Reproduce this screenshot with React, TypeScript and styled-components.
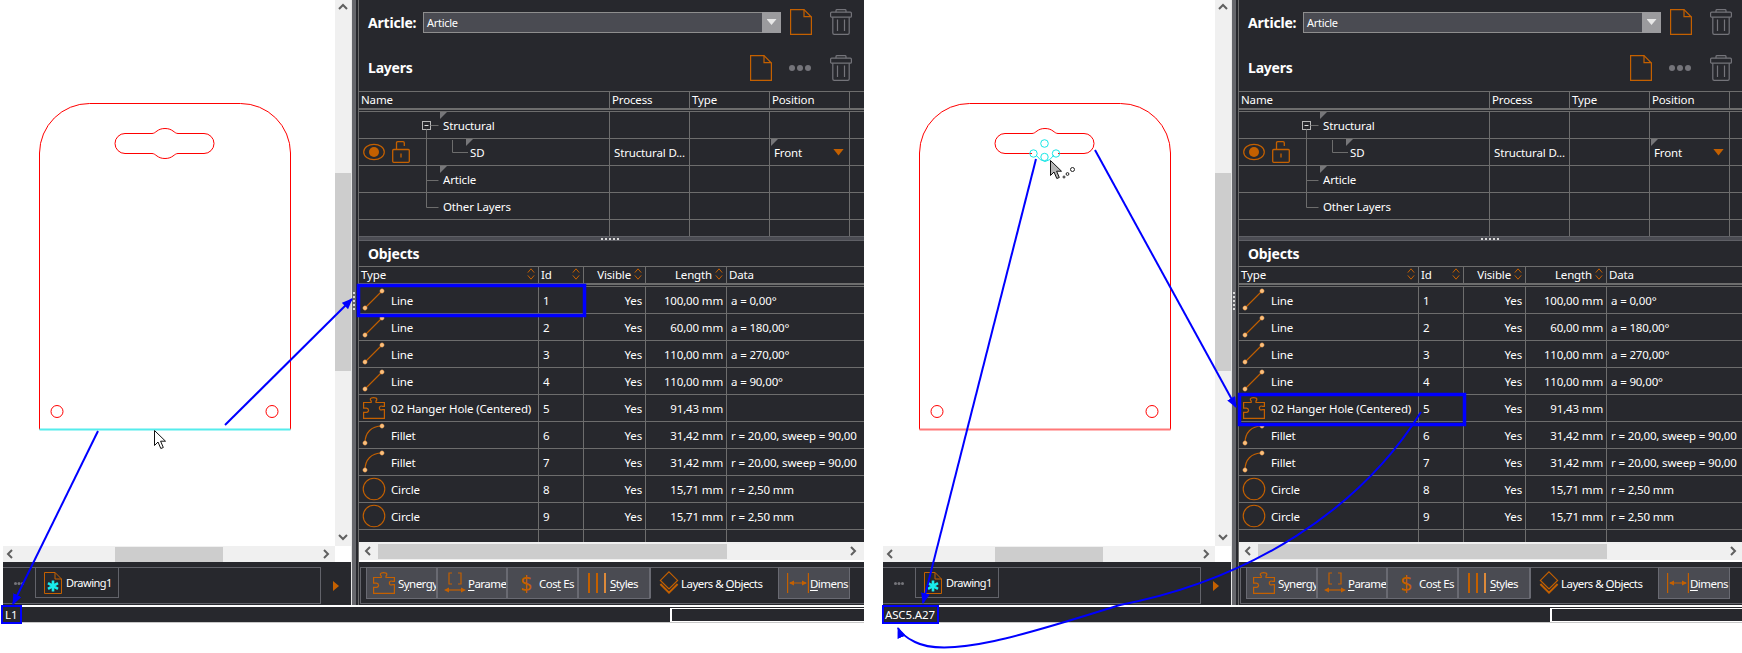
import React from "react";
import styled, { createGlobalStyle } from "styled-components";

const ORANGE = "#c46000";
const LINE = "#6d6d6d";
const DARK = "#27282d";
const FONT = `"Noto Sans", "Open Sans", Arial, sans-serif`;

const Global = createGlobalStyle`
  html, body { margin: 0; padding: 0; background: #fff; }
  * { box-sizing: border-box; }
`;

const Page = styled.div`
  position: relative;
  width: 1742px;
  height: 653px;
  overflow: hidden;
  background: #fff;
  display: flex;
  gap: 16px;
  font-family: ${FONT};
  font-size: 11.5px;
  letter-spacing: -0.15px;
  color: #fff;
`;
const Screen = styled.section`
  flex: none;
  width: 864px;
  height: 623px;
  display: flex;
  flex-direction: column;
`;
const Main = styled.div`
  display: grid;
  grid-template-columns: 348px 7px 506px;
  margin-left: 3px;
  height: 605px;
`;
const LeftColumn = styled.div`
  display: flex;
  flex-direction: column;
`;
const CanvasRow = styled.div`
  display: flex;
  height: 546px;
`;
const Canvas = styled.div`
  width: 332px;
  height: 546px;
  background: #fff;
`;
const VScroll = styled.div`
  width: 16px;
  height: 546px;
  background: #f0f0f0;
  display: flex;
  flex-direction: column;
  align-items: center;
`;
const VThumb = styled.div`
  width: 16px;
  height: 198px;
  margin-top: 157px;
  margin-bottom: auto;
  background: #cdcdcd;
`;
const HScrollRow = styled.div`
  width: 332px;
  height: 16px;
  background: #f0f0f0;
  display: flex;
  align-items: center;
  flex: none;
`;
const HThumb = styled.div`
  width: 108px;
  height: 15px;
  margin-left: 96px;
  margin-right: auto;
  background: #cdcdcd;
`;
const Corner = styled.div`
  display: flex;
  height: 16px;
`;
const DocTabsRow = styled.div`
  height: 43px;
  background: ${DARK};
  padding: 5px 0 1px;
  display: flex;
  align-items: stretch;
`;
const DocTabsStrip = styled.div`
  width: 318px;
  border: 1px solid #62636a;
  border-width: 1px 1px 1px 0;
  display: flex;
  align-items: flex-start;
`;
const MoreDots = styled.div`
  width: 32px;
  height: 31px;
  display: flex;
  align-items: center;
  justify-content: center;
`;
const DocTab = styled.div`
  width: 84px;
  height: 31px;
  margin-top: -1px;
  border: 1px solid #62636a;
  display: flex;
  align-items: center;
  gap: 4px;
  padding-left: 8px;
  font-size: 11px;
  letter-spacing: -0.5px;
`;
const DocArrow = styled.div`
  width: 30px;
  display: flex;
  align-items: center;
  justify-content: center;
  padding-right: 1px;
`;
const Splitter = styled.div`
  position: relative;
  background: linear-gradient(to right, #e6e6e6 0 1px, #66676c 1px 5px, ${DARK} 5px);
`;
const GripV = styled.div`
  position: absolute;
  left: 2px;
  top: 292px;
  width: 2px;
  height: 18px;
  background: repeating-linear-gradient(to bottom, #d8d8d8 0 2px, transparent 2px 4px);
`;
const Panel = styled.div`
  background: ${DARK};
  border-left: 1px solid ${LINE};
  display: flex;
  flex-direction: column;
  height: 605px;
  overflow: hidden;
`;
const ArticleRow = styled.div`
  height: 44px;
  display: flex;
  align-items: center;
  padding-left: 9px;
`;
const HeadLabel = styled.div`
  font-weight: 700;
  font-size: 14px;
  letter-spacing: -0.2px;
  white-space: nowrap;
`;
const ArticleLabel = styled(HeadLabel)`
  width: 55px;
`;
const Select = styled.div`
  width: 358px;
  height: 21px;
  border: 1px solid #8e8e8e;
  background: #4a4b52;
  display: flex;
  align-items: center;
  justify-content: space-between;
  padding-left: 3px;
  font-size: 11px;
  letter-spacing: -0.3px;
`;
const SelectButton = styled.div`
  width: 19px;
  height: 21px;
  margin-right: -1px;
  background: #9b9b9e;
  display: flex;
  align-items: center;
  justify-content: center;
`;
const SelectTriangle = styled.div`
  width: 10px;
  height: 6px;
  background: #e8e8e8;
  clip-path: polygon(0 0, 100% 0, 50% 100%);
`;
const IconSlot = styled.div<{ $left: number }>`
  margin-left: ${(p) => p.$left}px;
  display: flex;
  align-items: center;
`;
const LayersHead = styled.div`
  height: 47px;
  display: flex;
  align-items: center;
  padding-left: 9px;
`;
const Spacer = styled.div`
  flex: 1;
`;
const LayerTable = styled.div`
  position: relative;
  height: 145px;
  flex: none;
`;
const LAYER_COLS = "251px 80px 80px 80px 1fr";
const OBJ_COLS = "180px 45px 62px 81px 1fr";
const HeaderRow = styled.div<{ $cols: string }>`
  height: 21px;
  display: grid;
  grid-template-columns: ${(p) => p.$cols};
  border-top: 1px solid ${LINE};
  border-bottom: 1px solid ${LINE};
  position: relative;
  &::after {
    content: "";
    position: absolute;
    left: 0;
    right: 0;
    top: 16px;
    height: 2px;
    background: ${LINE};
  }
`;
const HeaderCell = styled.div<{ $right?: boolean; $last?: boolean }>`
  height: 16px;
  display: flex;
  align-items: center;
  justify-content: ${(p) => (p.$right ? "flex-end" : "space-between")};
  gap: 3px;
  padding: 0 3px 2px 2px;
  border-right: ${(p) => (p.$last ? "none" : `1px solid ${LINE}`)};
  white-space: nowrap;
`;
const GridRow = styled.div<{ $cols: string; $h?: number; $plain?: boolean }>`
  height: ${(p) => p.$h ?? 27}px;
  display: grid;
  grid-template-columns: ${(p) => p.$cols};
  border-bottom: ${(p) => (p.$plain ? "none" : `1px solid ${LINE}`)};
`;
const Cell = styled.div<{ $indent?: number; $right?: boolean; $last?: boolean }>`
  position: relative;
  display: flex;
  align-items: center;
  justify-content: ${(p) => (p.$right ? "flex-end" : "flex-start")};
  padding-left: ${(p) => p.$indent ?? 0}px;
  padding-right: ${(p) => (p.$right ? 3 : 0)}px;
  border-right: ${(p) => (p.$last ? "none" : `1px solid ${LINE}`)};
  white-space: nowrap;
  overflow: visible;
`;
const CornerMark = styled.span<{ $left: number }>`
  position: absolute;
  left: ${(p) => p.$left}px;
  top: 0;
  width: 7px;
  height: 7px;
  background: #77777a;
  clip-path: polygon(0 0, 100% 0, 0 100%);
`;
const TreeLines = styled.svg`
  position: absolute;
  left: 0;
  top: 0;
  pointer-events: none;
`;
const FrontArrow = styled.span`
  margin-left: auto;
  margin-right: 5px;
  width: 11px;
  height: 7px;
  background: ${ORANGE};
  clip-path: polygon(0 0, 100% 0, 50% 100%);
`;
const PaneSplit = styled.div`
  height: 5px;
  flex: none;
  background: #4b4c53;
  border-top: 1px solid #5f6066;
  border-bottom: 1px solid #5f6066;
  display: flex;
  align-items: center;
  justify-content: center;
`;
const PaneGrip = styled.div`
  width: 18px;
  height: 2px;
  margin-right: 3px;
  background: repeating-linear-gradient(to right, #d8d8d8 0 2px, transparent 2px 4px);
`;
const ObjectsHead = styled.div`
  height: 25px;
  flex: none;
  display: flex;
  align-items: center;
  padding-left: 9px;
`;
const ObjectTable = styled.div`
  height: 276px;
  flex: none;
`;
const TypeIconBox = styled.div`
  width: 24px;
  height: 24px;
  flex: none;
  margin-right: 5px;
  margin-left: 3px;
  display: flex;
  align-items: center;
  justify-content: center;
`;
const ObjScroll = styled.div`
  height: 18px;
  flex: none;
  background: #f0f0f0;
  display: flex;
  align-items: center;
  padding-left: 2px;
  padding-right: 2px;
`;
const ObjThumb = styled.div`
  width: 349px;
  height: 15px;
  margin-left: 1px;
  margin-right: auto;
  background: #cdcdcd;
`;
const WhiteGap = styled.div`
  height: 2px;
  flex: none;
  background: #fff;
`;
const ToolRow = styled.div`
  height: 43px;
  flex: none;
  padding: 5px 0 1px;
`;
const ToolStrip = styled.div`
  height: 37px;
  border: 1px solid #62636a;
  border-right: none;
  margin-left: 1px;
  padding-left: 5px;
  display: flex;
  align-items: flex-start;
`;
const ToolButton = styled.div<{ $w: number; $active?: boolean; $pad: number; $gap: number; $iconW: number }>`
  width: ${(p) => p.$w}px;
  height: 32px;
  margin-top: -1px;
  flex: none;
  display: flex;
  align-items: center;
  overflow: hidden;
  background: ${(p) => (p.$active ? "transparent" : "#4a4b52")};
  border: 1px solid ${(p) => (p.$active ? "transparent" : "#696a72")};
  border-left-color: #696a72;
  padding-left: ${(p) => p.$pad}px;
  gap: ${(p) => p.$gap}px;
  white-space: nowrap;
  letter-spacing: -0.55px;
  & > svg {
    flex: none;
    width: ${(p) => p.$iconW}px;
  }
  u {
    text-underline-offset: 2px;
  }
`;
const ToolLabel = styled.span`
  display: block;
`;
const Dollar = styled.span`
  width: 22px;
  text-align: center;
  color: ${ORANGE};
  font-size: 21px;
  line-height: 1;
  flex: none;
`;
const StatusBar = styled.div`
  margin-top: 2px;
  margin-left: 3px;
  height: 16px;
  display: flex;
  background: ${DARK};
  border-bottom: 1px solid #c8c8c8;
`;
const StatusText = styled.div`
  width: 667px;
  padding-left: 2px;
  line-height: 15px;
`;
const StatusBox = styled.div`
  flex: 1;
  margin-top: 1px;
  border: 1px solid #fff;
  border-right: none;
  border-left-width: 2px;
`;
const Overlay = styled.svg`
  position: absolute;
  left: 0;
  top: 0;
  pointer-events: none;
`;

/* ------------ icons ------------- */
const Doc = ({ color = ORANGE }: { color?: string }) => (
  <svg width="22" height="26" viewBox="0 0 22 26" fill="none" stroke={color} strokeWidth="1.2">
    <path d="M.6.6H14L21.4 8V25.4H.6Z" />
    <path d="M14 .6V7.6H21.4" />
  </svg>
);
const Trash = () => (
  <svg width="22" height="26" viewBox="0 0 22 26" fill="none" stroke="#74747a" strokeWidth="1.2">
    <path d="M6 3.2V1.4Q6 .6 7 .6H15Q16 .6 16 1.4V3.2" />
    <rect x=".6" y="3.2" width="20.8" height="5" rx="1" />
    <path d="M2.8 8.2V24Q2.8 25.4 4.2 25.4H17.8Q19.2 25.4 19.2 24V8.2M7.5 10.5V22M14.5 10.5V22" />
  </svg>
);
const Dots = ({ w = 22, color = "#74747a", r = 3 }: { w?: number; color?: string; r?: number }) => (
  <svg width={w} height={r * 2} viewBox={`0 0 ${w} ${r * 2}`} fill={color}>
    <circle cx={r} cy={r} r={r} />
    <circle cx={w / 2} cy={r} r={r} />
    <circle cx={w - r} cy={r} r={r} />
  </svg>
);
const Sort = () => (
  <svg width="8" height="12" viewBox="0 0 8 12" fill="none" stroke={ORANGE} strokeWidth="1" style={{ flex: "none" }}>
    <path d="M.8 4.6L4 .8L7.2 4.6M.8 7.4L4 11.2L7.2 7.4" />
  </svg>
);
const Node = ({ x, y }: { x: number; y: number }) => (
  <>
    <circle cx={x} cy={y} r="2.2" fill="#f0a050" stroke="none" />
    <path d={`M${x - 2.4} ${y}H${x + 2.4}M${x} ${y - 2.4}V${y + 2.4}`} stroke="#ffd9a8" strokeWidth=".7" />
  </>
);
const LineIcon = () => (
  <svg width="24" height="24" viewBox="0 0 24 24" fill="none" stroke={ORANGE} strokeWidth="1.1">
    <path d="M3 20L20 3" />
    <Node x={3} y={20} />
    <Node x={20} y={3} />
  </svg>
);
const FilletIcon = () => (
  <svg width="24" height="24" viewBox="0 0 24 24" fill="none" stroke={ORANGE} strokeWidth="1.1">
    <path d="M3 20C3 10 9 3 20 3" />
    <Node x={3} y={20} />
    <Node x={20} y={3} />
  </svg>
);
const CircleIcon = () => (
  <svg width="24" height="24" viewBox="0 0 24 24" fill="none" stroke={ORANGE} strokeWidth="1.1">
    <circle cx="12" cy="12" r="10.8" />
  </svg>
);
const Puzzle = ({ size = 22 }: { size?: number }) => (
  <svg width={size} height={size} viewBox="0 0 22 22" fill="none" stroke={ORANGE} strokeWidth="1.2">
    <path d="M.6 5.5H8.2V4Q7 3 7.4 1.8Q8 .6 10.5 .6Q13.5.6 13.8 2Q14 3.2 13 4V5.5H21.4V9.3H19.5Q18 8.6 16.8 9.6Q15.8 11 16.8 12.4Q18 13.3 19.5 12.7H21.4V21.4H.6V15.3H3.5Q5.2 15.3 5.6 13.5Q5.4 11.4 3.5 11.2H.6Z" />
  </svg>
);
const ParamIcon = () => (
  <svg width="22" height="22" viewBox="0 0 22 22" fill="none" stroke={ORANGE} strokeWidth="1.2">
    <path d="M8 1H5V12H8M14 1H17V12H14" />
    <path d="M3 18H19" />
    <path d="M0 18L5 15.5V20.5ZM22 18L17 15.5V20.5Z" fill={ORANGE} stroke="none" />
  </svg>
);
const StylesIcon = () => (
  <svg width="22" height="22" viewBox="0 0 22 22" fill={ORANGE}>
    <rect x="1" y="1" width="2" height="20" />
    <rect x="9" y="1" width="2" height="20" />
    <rect x="17" y="1" width="2" height="20" fill="#dd8a3a" />
  </svg>
);
const LayersIcon = () => (
  <svg width="20" height="24" viewBox="0 0 20 24" fill="none" stroke={ORANGE} strokeWidth="1.2">
    <path d="M10 .8L18.6 9.4L10 18L1.4 9.4Z" />
    <path d="M1.4 13L10 21.6L18.6 13" strokeWidth="2" />
  </svg>
);
const DimIcon = () => (
  <svg width="22" height="22" viewBox="0 0 22 22" fill="none" stroke={ORANGE} strokeWidth="1.2">
    <path d="M.6 1V21M21.4 1V21M3 11H19" />
    <path d="M2 11L7 8.5V13.5ZM20 11L15 8.5V13.5Z" fill={ORANGE} stroke="none" />
  </svg>
);
const DrawingIcon = () => (
  <svg width="18" height="22" viewBox="0 0 18 22" fill="none" stroke={ORANGE} strokeWidth="1">
    <path d="M.5.5H11L17.5 7V21.5H.5Z" />
    <path d="M11 .5V7H17.5" />
    <path d="M9 8.5V19.5M4 11.2L14 16.8M14 11.2L4 16.8" stroke="#19ecec" strokeWidth="2.6" />
  </svg>
);
const Chevron = ({ dir }: { dir: "left" | "right" | "up" | "down" }) => {
  const d = {
    left: "M7 2L3 6L7 10",
    right: "M3 2L7 6L3 10",
    up: "M2 7L6 3L10 7",
    down: "M2 3L6 7L10 3",
  }[dir];
  return (
    <svg width="16" height="16" viewBox="-2 -2 16 16" fill="none" stroke="#606060" strokeWidth="2" style={{ flex: "none" }}>
      <path d={d} />
    </svg>
  );
};
const EyeIcon = () => (
  <svg width="22" height="18" viewBox="0 0 22 18" fill="none" stroke={ORANGE} strokeWidth="1.2">
    <ellipse cx="11" cy="9" rx="10.3" ry="7.7" />
    <circle cx="11" cy="9" r="5" fill={ORANGE} stroke="none" />
  </svg>
);
const LockIcon = () => (
  <svg width="18" height="22" viewBox="0 0 18 22" fill="none" stroke={ORANGE} strokeWidth="1.3">
    <rect x=".7" y="8.5" width="16.6" height="12.8" rx="1" />
    <path d="M4.5 8.5V2Q4.5.7 5.8.7H11Q12.3.7 12.3 2V5M9 12.5V16.5" />
  </svg>
);
const DocTabArrow = () => (
  <svg width="6" height="10" viewBox="0 0 6 10" fill={ORANGE}>
    <path d="M0 0L6 5L0 10Z" />
  </svg>
);
const Cursor = ({ x, y, fill }: { x: number; y: number; fill: string }) => (
  <path
    transform={`translate(${x} ${y})`}
    d="M.5.5V15.5L4 12L6.8 18.5L9.3 17.5L6.6 11.2H11.5Z"
    fill={fill}
    stroke="#111"
    strokeWidth="1"
  />
);

/* ----------- data ------------ */
type Kind = "line" | "fillet" | "circle" | "hole";
const objects: { kind: Kind; name: string; id: number; len: string; data: string }[] = [
  { kind: "line", name: "Line", id: 1, len: "100,00 mm", data: "a = 0,00°" },
  { kind: "line", name: "Line", id: 2, len: "60,00 mm", data: "a = 180,00°" },
  { kind: "line", name: "Line", id: 3, len: "110,00 mm", data: "a = 270,00°" },
  { kind: "line", name: "Line", id: 4, len: "110,00 mm", data: "a = 90,00°" },
  { kind: "hole", name: "02 Hanger Hole (Centered)", id: 5, len: "91,43 mm", data: "" },
  { kind: "fillet", name: "Fillet", id: 6, len: "31,42 mm", data: "r = 20,00, sweep = 90,00" },
  { kind: "fillet", name: "Fillet", id: 7, len: "31,42 mm", data: "r = 20,00, sweep = 90,00" },
  { kind: "circle", name: "Circle", id: 8, len: "15,71 mm", data: "r = 2,50 mm" },
  { kind: "circle", name: "Circle", id: 9, len: "15,71 mm", data: "r = 2,50 mm" },
];
const kindIcon = (k: Kind) =>
  k === "line" ? <LineIcon /> : k === "fillet" ? <FilletIcon /> : k === "circle" ? <CircleIcon /> : <Puzzle />;

/* ----------- drawing ------------ */
const Drawing = ({ variant }: { variant: 1 | 2 }) => (
  <svg width="332" height="546" viewBox="3 0 332 546" fill="none" stroke="#ff0000" strokeWidth="1">
    <path d="M39.5 429.5V153A50 50 0 0 1 89.5 103.5H240.5A50 50 0 0 1 290.5 153V429.5" />
    <path d="M39.5 429.5H290.5" stroke={variant === 1 ? "#55ecec" : "#ff7878"} strokeWidth="2" />
    <path d="M152 153.5H125A10 10 0 0 1 125 133.5H152C156 133.5 157 128.5 165 128.5C173 128.5 174 133.5 178 133.5H204A10 10 0 0 1 204 153.5H178" />
    <circle cx="57" cy="411.5" r="6" />
    <circle cx="272" cy="411.5" r="6" />
    {variant === 1 ? (
      <path d="M178 153.5C174 153.5 173 158.5 165 158.5C157 158.5 156 153.5 152 153.5" />
    ) : (
      <g stroke="#19e6e6">
        <circle cx="164.5" cy="143.5" r="3.8" />
        <circle cx="153.5" cy="153.5" r="3.7" />
        <circle cx="176" cy="153.5" r="3.7" />
        <circle cx="164.5" cy="157" r="3.7" />
        <path d="M156 155Q160 161 165 161.5Q170 161 174 155" />
      </g>
    )}
    {variant === 1 ? (
      <Cursor x={154} y={430} fill="#fff" />
    ) : (
      <>
        <Cursor x={170} y={160} fill="#b5b5b5" />
        <g stroke="#222" fill="#fff">
          <circle cx="192.5" cy="169.5" r="2" />
          <circle cx="187.5" cy="174" r="1.4" />
          <circle cx="184" cy="177" r="1" />
        </g>
      </>
    )}
  </svg>
);

const ToolTabs = () => (
  <ToolStrip>
    <ToolButton $w={71} $pad={6} $gap={3} $iconW={22}>
      <Puzzle />
      <ToolLabel>S<u>y</u>nergy</ToolLabel>
    </ToolButton>
    <ToolButton $w={70} $pad={6} $gap={2} $iconW={22}>
      <ParamIcon />
      <ToolLabel><u>P</u>arame</ToolLabel>
    </ToolButton>
    <ToolButton $w={71} $pad={7} $gap={2} $iconW={22}>
      <Dollar>$</Dollar>
      <ToolLabel>Cos<u>t</u> Es</ToolLabel>
    </ToolButton>
    <ToolButton $w={72} $pad={8} $gap={1} $iconW={22}>
      <StylesIcon />
      <ToolLabel><u>S</u>tyles</ToolLabel>
    </ToolButton>
    <ToolButton $w={128} $pad={8} $gap={2} $iconW={20} $active>
      <LayersIcon />
      <ToolLabel>Layers &amp; <u>O</u>bjects</ToolLabel>
    </ToolButton>
    <ToolButton $w={72} $pad={8} $gap={1} $iconW={22}>
      <DimIcon />
      <ToolLabel><u>D</u>imens</ToolLabel>
    </ToolButton>
  </ToolStrip>
);

const LayersTable = () => (
  <LayerTable>
    <HeaderRow $cols={LAYER_COLS}>
      <HeaderCell>Name</HeaderCell>
      <HeaderCell>Process</HeaderCell>
      <HeaderCell>Type</HeaderCell>
      <HeaderCell>Position</HeaderCell>
      <HeaderCell $last />
    </HeaderRow>
    <GridRow $cols={LAYER_COLS}>
      <Cell $indent={84}>
        <CornerMark $left={81} />
        Structural
      </Cell>
      <Cell />
      <Cell />
      <Cell />
      <Cell $last />
    </GridRow>
    <GridRow $cols={LAYER_COLS}>
      <Cell $indent={4}>
        <EyeIcon />
        <IconSlot $left={7}>
          <LockIcon />
        </IconSlot>
        <CornerMark $left={107} />
        <IconSlot $left={60}>SD</IconSlot>
      </Cell>
      <Cell $indent={4}>Structural D...</Cell>
      <Cell />
      <Cell $indent={4}>
        <CornerMark $left={1} />
        Front
        <FrontArrow />
      </Cell>
      <Cell $last />
    </GridRow>
    <GridRow $cols={LAYER_COLS}>
      <Cell $indent={84}>
        <CornerMark $left={81} />
        Article
      </Cell>
      <Cell />
      <Cell />
      <Cell />
      <Cell $last />
    </GridRow>
    <GridRow $cols={LAYER_COLS}>
      <Cell $indent={84}>Other Layers</Cell>
      <Cell />
      <Cell />
      <Cell />
      <Cell $last />
    </GridRow>
    <GridRow $cols={LAYER_COLS} $h={16} $plain>
      <Cell />
      <Cell />
      <Cell />
      <Cell />
      <Cell $last />
    </GridRow>
    <TreeLines width="251" height="145" viewBox="0 0 251 145" fill="none" stroke={LINE}>
      <rect x="63.5" y="30.5" width="8" height="8" stroke="#b8b8b8" />
      <path d="M65.5 34.5H69.5" stroke="#ddd" />
      <path d="M71.5 34.5H79.5M67.5 38.5V116.5H79.5M67.5 89.5H79.5M93.5 49V61.5H109" />
    </TreeLines>
  </LayerTable>
);

const ObjectsTable = () => (
  <ObjectTable>
    <HeaderRow $cols={OBJ_COLS}>
      <HeaderCell>Type<Sort /></HeaderCell>
      <HeaderCell>Id<Sort /></HeaderCell>
      <HeaderCell $right>Visible<Sort /></HeaderCell>
      <HeaderCell $right>Length<Sort /></HeaderCell>
      <HeaderCell $last>Data</HeaderCell>
    </HeaderRow>
    {objects.map((o) => (
      <GridRow $cols={OBJ_COLS} key={o.id}>
        <Cell>
          <TypeIconBox>{kindIcon(o.kind)}</TypeIconBox>
          {o.name}
        </Cell>
        <Cell $indent={4}>{o.id}</Cell>
        <Cell $right>Yes</Cell>
        <Cell $right>{o.len}</Cell>
        <Cell $indent={4} $last>{o.data}</Cell>
      </GridRow>
    ))}
    <GridRow $cols={OBJ_COLS} $h={12} $plain>
      <Cell />
      <Cell />
      <Cell />
      <Cell />
      <Cell $last />
    </GridRow>
  </ObjectTable>
);

const Workspace = ({ variant, status }: { variant: 1 | 2; status: string }) => (
  <Screen>
    <Main>
      <LeftColumn>
        <CanvasRow>
          <Canvas>
            <Drawing variant={variant} />
          </Canvas>
          <VScroll>
            <Chevron dir="up" />
            <VThumb />
            <Chevron dir="down" />
          </VScroll>
        </CanvasRow>
        <Corner>
          <HScrollRow>
            <Chevron dir="left" />
            <HThumb />
            <Chevron dir="right" />
          </HScrollRow>
        </Corner>
        <DocTabsRow>
          <DocTabsStrip>
            <MoreDots>
              <Dots w={10} color="#75757a" r={1.5} />
            </MoreDots>
            <DocTab>
              <DrawingIcon />
              Drawing1
            </DocTab>
          </DocTabsStrip>
          <DocArrow>
            <DocTabArrow />
          </DocArrow>
        </DocTabsRow>
      </LeftColumn>
      <Splitter>
        <GripV />
      </Splitter>
      <Panel>
        <ArticleRow>
          <ArticleLabel>Article:</ArticleLabel>
          <Select>
            Article
            <SelectButton>
              <SelectTriangle />
            </SelectButton>
          </Select>
          <IconSlot $left={9}>
            <Doc />
          </IconSlot>
          <IconSlot $left={18}>
            <Trash />
          </IconSlot>
        </ArticleRow>
        <LayersHead>
          <HeadLabel>Layers</HeadLabel>
          <Spacer />
          <Doc />
          <IconSlot $left={17}>
            <Dots />
          </IconSlot>
          <IconSlot $left={19}>
            <Trash />
          </IconSlot>
          <IconSlot $left={12} />
        </LayersHead>
        <LayersTable />
        <PaneSplit>
          <PaneGrip />
        </PaneSplit>
        <ObjectsHead>
          <HeadLabel>Objects</HeadLabel>
        </ObjectsHead>
        <ObjectsTable />
        <ObjScroll>
          <Chevron dir="left" />
          <ObjThumb />
          <Chevron dir="right" />
        </ObjScroll>
        <WhiteGap />
        <ToolRow>
          <ToolTabs />
        </ToolRow>
      </Panel>
    </Main>
    <StatusBar>
      <StatusText>{status}</StatusText>
      <StatusBox />
    </StatusBar>
  </Screen>
);

const BLUE = "#0000ff";
const Annotations = () => (
  <Overlay width="1742" height="653" viewBox="0 0 1742 653" fill="none" stroke={BLUE} strokeWidth="2">
    <defs>
      <marker id="head" markerWidth="11" markerHeight="9" refX="10" refY="4.5" orient="auto" markerUnits="userSpaceOnUse">
        <path d="M0 0L11 4.5L0 9Z" fill={BLUE} stroke="none" />
      </marker>
    </defs>
    <g strokeWidth="3.5">
      <rect x="358.5" y="285.5" width="226" height="30" />
      <rect x="1239.5" y="394.5" width="225" height="30" />
    </g>
    <g strokeWidth="2">
      <rect x="2" y="606" width="19" height="17" />
      <rect x="883" y="606" width="55" height="17" />
    </g>
    <path d="M98 431L13 604" markerEnd="url(#head)" />
    <path d="M225 425L352 299" markerEnd="url(#head)" />
    <path d="M1036 159L923 603" markerEnd="url(#head)" />
    <path d="M1095 150L1236 407" markerEnd="url(#head)" />
    <path d="M1421 412C1360 510 1250 580 1120 605C1040 630 950 660 915 642C905 637 900 633 898 628" markerEnd="url(#head)" />
  </Overlay>
);

export default function App() {
  return (
    <>
      <Global />
      <Page>
        <Workspace variant={1} status="L1" />
        <Workspace variant={2} status="ASC5.A27" />
        <Annotations />
      </Page>
    </>
  );
}
